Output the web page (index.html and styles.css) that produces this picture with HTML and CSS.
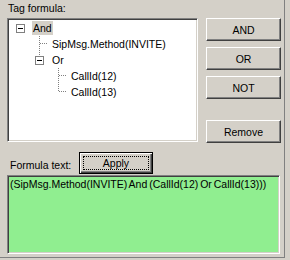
FILE: index.html
```html
<!DOCTYPE html>
<html>
<head>
<meta charset="utf-8">
<link rel="stylesheet" href="styles.css">
</head>
<body>
<div class="panel">
  <div class="caption">Tag formula:</div>
  <div class="top">
    <div class="tree">
      <div class="row">
        <svg class="cell" width="19" height="16" viewBox="0 0 19 16"><rect x="6.5" y="4.5" width="8" height="8" fill="#fff" stroke="#808080"/><line x1="8" y1="8.5" x2="13" y2="8.5" stroke="#000"/></svg>
        <span class="lbl sel">And</span>
      </div>
      <div class="row">
        <span class="ind1"></span>
        <svg class="cell" width="19" height="16" viewBox="0 0 19 16"><line x1="10.5" y1="0" x2="10.5" y2="16" stroke="#808080" stroke-dasharray="1 1"/><line x1="11" y1="7.5" x2="19" y2="7.5" stroke="#808080" stroke-dasharray="1 1"/></svg>
        <span class="lbl">SipMsg.Method(INVITE)</span>
      </div>
      <div class="row">
        <span class="ind1"></span>
        <svg class="cell" width="19" height="16" viewBox="0 0 19 16"><line x1="10.5" y1="0" x2="10.5" y2="4" stroke="#808080" stroke-dasharray="1 1"/><rect x="6.5" y="4.5" width="8" height="8" fill="#fff" stroke="#808080"/><line x1="8" y1="8.5" x2="13" y2="8.5" stroke="#000"/></svg>
        <span class="lbl">Or</span>
      </div>
      <div class="row">
        <span class="ind2"></span>
        <svg class="cell" width="19" height="16" viewBox="0 0 19 16"><line x1="10.5" y1="0" x2="10.5" y2="16" stroke="#808080" stroke-dasharray="1 1"/><line x1="11" y1="7.5" x2="19" y2="7.5" stroke="#808080" stroke-dasharray="1 1"/></svg>
        <span class="lbl">CallId(12)</span>
      </div>
      <div class="row">
        <span class="ind2"></span>
        <svg class="cell" width="19" height="16" viewBox="0 0 19 16"><line x1="10.5" y1="0" x2="10.5" y2="8" stroke="#808080" stroke-dasharray="1 1"/><line x1="11" y1="7.5" x2="19" y2="7.5" stroke="#808080" stroke-dasharray="1 1"/></svg>
        <span class="lbl">CallId(13)</span>
      </div>
    </div>
    <div class="btns">
      <button class="btn">AND</button>
      <button class="btn">OR</button>
      <button class="btn">NOT</button>
      <button class="btn remove">Remove</button>
    </div>
  </div>
  <div class="mid">
    <span class="caption2">Formula text:</span>
    <button class="btn default"><span class="focus">Apply</span></button>
  </div>
  <div class="formula">(SipMsg.Method(INVITE) And (CallId(12) Or CallId(13)))</div>
</div>
</body>
</html>
```

FILE: styles.css
```css
* { box-sizing: border-box; }
html, body { margin: 0; padding: 0; }
body {
  background: #d4d0c8;
  width: 290px;
  height: 260px;
  overflow: hidden;
  font-family: "Liberation Sans", Arial, sans-serif;
  font-size: 10.5px;
  color: #000;
}
.panel {
  width: 285px;
  height: 258px;
  padding: 2px 0 0 7px;
  border-right: 1px solid #808080;
  border-bottom: 1px solid #808080;
  display: flex;
  flex-direction: column;
}
.caption {
  line-height: 13px;
  height: 13px;
  padding-left: 1px;
}
.top {
  margin-top: 3px;
  display: flex;
  align-items: flex-start;
  height: 125px;
}
.tree {
  width: 191px;
  height: 124px;
  background: #fff;
  border: 1px solid;
  border-color: #808080 #fff #fff #808080;
  box-shadow: inset 1px 1px #404040, inset -1px -1px #d4d0c8;
  padding: 1px 0 0 2px;
}
.row {
  display: flex;
  align-items: center;
  height: 16px;
}
.cell { display: block; flex: none; }
.ind1 { width: 19px; flex: none; }
.ind2 { width: 38px; flex: none; }
.lbl {
  margin-left: 3px;
  padding: 0 1px;
  line-height: 14px;
  height: 14px;
  white-space: nowrap;
}
.sel { background: #d4d0c8; }
.btns {
  margin-left: 8px;
  width: 75px;
  display: flex;
  flex-direction: column;
  gap: 6px;
}
.btn {
  width: 75px;
  height: 23px;
  padding: 0;
  margin: 0;
  font-family: "Liberation Sans", Arial, sans-serif;
  font-size: 10.5px;
  color: #000;
  background: #d4d0c8;
  border: 1px solid;
  border-color: #fff #404040 #404040 #fff;
  box-shadow: inset -1px -1px #808080;
}
.remove { margin-top: 15px; }
.mid {
  margin-top: 9px;
  display: flex;
  align-items: flex-end;
}
.caption2 {
  width: 72px;
  padding-left: 3px;
  line-height: 13px;
  padding-bottom: 2px;
}
.default {
  width: 74px;
  height: 22px;
  border: 1px solid #000;
  box-shadow: inset 1px 1px #fff, inset -1px -1px #404040, inset -2px -2px #808080;
  padding: 3px;
}
.focus {
  display: block;
  height: 100%;
  border: 1px dotted #000;
  line-height: 12px;
}
.formula {
  margin-top: 1px;
  width: 273px;
  height: 79px;
  background: #90ee90;
  border: 1px solid;
  border-color: #808080 #fff #fff #808080;
  box-shadow: inset 1px 1px #404040, inset -1px -1px #d4d0c8;
  padding: 2px 0 0 2px;
  line-height: 13px;
  white-space: nowrap;
  word-spacing: -1px;
}
```
